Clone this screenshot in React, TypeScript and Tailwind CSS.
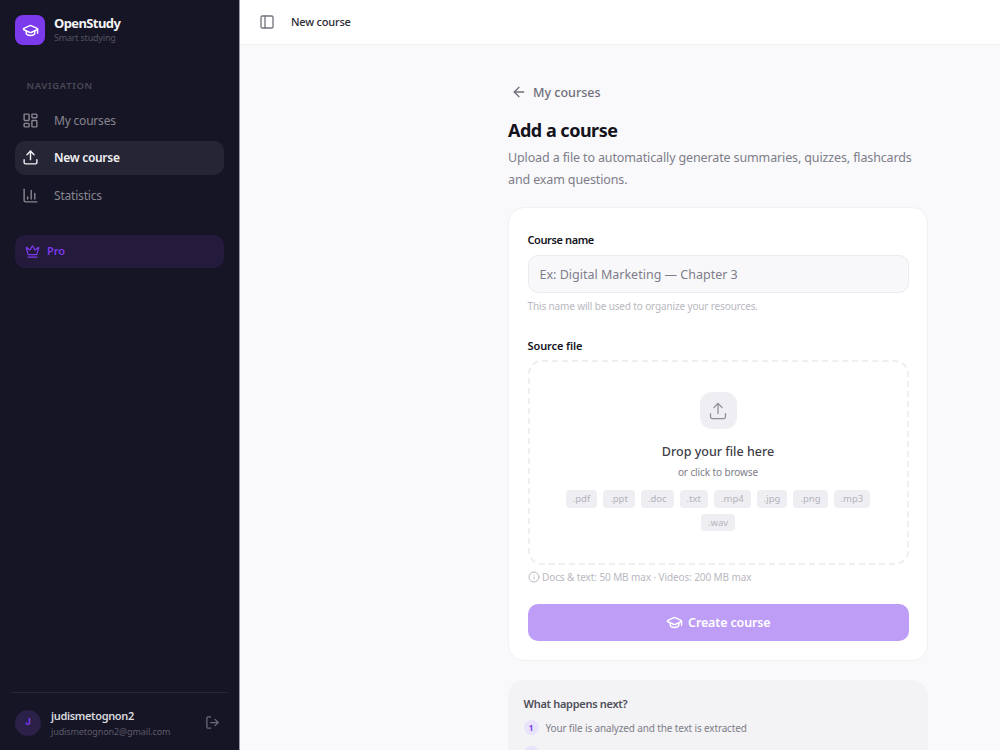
import React from 'react';
import {
  ArrowLeft,
  ChartColumn,
  Crown,
  GraduationCap,
  Info,
  LayoutDashboard,
  LogOut,
  PanelLeft,
  Upload,
} from 'lucide-react';

const extensions = ['.pdf', '.ppt', '.doc', '.txt', '.mp4', '.jpg', '.png', '.mp3', '.wav'];

function Sidebar() {
  return (
    <aside className="w-[240px] h-[750px] shrink-0 bg-[#161525] border-r border-[#9a9aa5] flex flex-col">
      <div className="flex items-center gap-[9px] pl-[15px] pt-[15px]">
        <div className="w-[30px] h-[30px] rounded-lg bg-[#7c3aed] flex items-center justify-center">
          <GraduationCap className="w-[17px] h-[17px] text-white" />
        </div>
        <div className="flex flex-col">
          <span className="text-[13px] leading-[16px] font-bold tracking-[-0.6px] text-[#f4f4f6]">OpenStudy</span>
          <span className="text-[9px] leading-[14px] tracking-[-0.2px] text-[#55535f]">Smart studying</span>
        </div>
      </div>

      <div className="mt-[34px] pl-[26.5px] text-[9.5px] leading-[14px] font-semibold tracking-[0.07em] text-[#4a4956]">NAVIGATION</div>

      <nav className="mt-[10.5px] px-[15px] flex flex-col gap-[4px]">
        <div className="h-[33.5px] flex items-center gap-[15.5px] pl-[6.5px] text-[#87858f]">
          <LayoutDashboard className="w-[17px] h-[17px]" />
          <span className="pt-[1px] text-[12px] tracking-[-0.2px]">My courses</span>
        </div>
        <div className="h-[33.5px] flex items-center gap-[15.5px] pl-[6.5px] rounded-[10px] bg-[#262536] text-[#f0f0f3]">
          <Upload className="w-[17px] h-[17px]" />
          <span className="pt-[1px] text-[12px] font-semibold tracking-[-0.3px]">New course</span>
        </div>
        <div className="h-[33.5px] flex items-center gap-[15.5px] pl-[6.5px] text-[#87858f]">
          <ChartColumn className="w-[17px] h-[17px]" />
          <span className="pt-[1px] text-[12px] tracking-[-0.2px]">Statistics</span>
        </div>
      </nav>

      <div className="mx-[15px] mt-[23px] h-[33px] rounded-[10px] bg-[#231a3c] flex items-center gap-[7px] pl-[10px] text-[#7c3aed]">
        <Crown className="w-[15px] h-[15px]" />
        <span className="text-[11px] font-semibold">Pro</span>
      </div>

      <div className="mt-auto mx-[11px] border-t border-[#272635] h-[58px] pt-[2px] flex items-center pl-[4px] pr-[8px]">
        <div className="w-[26px] h-[26px] rounded-full bg-[#2a2048] flex items-center justify-center font-['Inter',sans-serif] text-[9.5px] font-bold text-[#7c3aed]">J</div>
        <div className="ml-[10px] pt-[2px] flex flex-col flex-1">
          <span className="text-[11px] leading-[16px] font-semibold tracking-[-0.35px] text-[#d8d8de]">judismetognon2</span>
          <span className="text-[9px] leading-[15px] tracking-[-0.1px] text-[#5c5a67]">judismetognon2@gmail.com</span>
        </div>
        <LogOut className="w-[15px] h-[15px] text-[#6d6b77]" />
      </div>
    </aside>
  );
}

function Steps() {
  return (
    <div className="mt-[19px] rounded-2xl bg-[#f3f3f5] px-[15.5px] pt-[16px] pb-[16px]">
      <div className="text-[11px] leading-[16px] font-semibold tracking-[-0.3px] text-[#4f4e5a]">What happens next?</div>
      <div className="mt-[8px] flex items-center gap-[7px]">
        <div className="w-[15px] h-[15px] rounded-full bg-[#e9e2fb] flex items-center justify-center text-[8px] font-bold text-[#7c3aed]">1</div>
        <span className="text-[10px] leading-[16px] tracking-[-0.15px] text-[#7e7d89]">Your file is analyzed and the text is extracted</span>
      </div>
      <div className="mt-[10px] flex items-center gap-[7px]">
        <div className="w-[15px] h-[15px] rounded-full bg-[#e9e2fb] flex items-center justify-center text-[8px] font-bold text-[#7c3aed]">2</div>
        <span className="text-[10px] leading-[16px] tracking-[-0.15px] text-[#7e7d89]">You choose which resources to generate for your project</span>
      </div>
    </div>
  );
}

export default function App() {
  return (
    <div className="font-['Noto_Sans',sans-serif] flex w-[1000px] h-[750px] overflow-hidden bg-[#f9f9fb]">
      <Sidebar />
      <div className="flex-1 flex flex-col min-w-0">
        <header className="h-[45px] shrink-0 bg-white border-b border-[#f0f0f3] flex items-center pl-[18.5px] gap-[16.5px]">
          <PanelLeft className="w-4 h-4 text-[#75747f]" />
          <span className="text-[11px] font-medium tracking-[-0.2px] text-[#2c2b36]">New course</span>
        </header>

        <main className="flex-1 overflow-hidden pl-[268px] pr-[72px]">
          <div className="mt-[38px] flex items-center gap-[6px] text-[#6f6e7a] pl-[3px]">
            <ArrowLeft className="w-4 h-4 -mt-[2px]" />
            <span className="text-[12.5px] leading-[20px] font-medium">My courses</span>
          </div>
          <h1 className="mt-[14px] text-[18px] leading-[26px] font-bold tracking-[-0.5px] text-[#14131c]">Add a course</h1>
          <p className="mt-[4px] text-[12.5px] leading-[22px] tracking-[-0.13px] text-[#7e7d89]">
            Upload a file to automatically generate summaries, quizzes, flashcards and exam questions.
          </p>

          <div className="mt-[16px] rounded-2xl bg-white border border-[#f1f1f4] px-[18.5px] pt-[24px] pb-[18.5px]">
            <label className="block text-[11px] leading-[16px] font-semibold tracking-[-0.4px] text-[#14131c]">Course name</label>
            <div className="mt-[7px] h-[38px] rounded-[10px] border border-[#ececf0] bg-[#f8f8fa] flex items-center pl-[11px] pt-[2px] text-[12.5px] text-[#7e7d89]">
              Ex: Digital Marketing — Chapter 3
            </div>
            <p className="mt-[6px] text-[10px] leading-[14px] tracking-[-0.14px] text-[#b9b8c0]">This name will be used to organize your resources.</p>

            <label className="mt-[25px] block text-[11px] leading-[16px] font-semibold tracking-[-0.1px] text-[#14131c]">Source file</label>
            <div className="mt-[6px] h-[205px] rounded-[14px] border-2 border-dashed border-[#efeff3] flex flex-col items-center pt-[30px]">
              <div className="w-[37px] h-[37px] rounded-xl bg-[#efeff3] flex items-center justify-center">
                <Upload strokeWidth={1.5} className="w-5 h-5 text-[#8e8d98]" />
              </div>
              <div className="mt-[14px] text-[12.5px] leading-[18px] font-medium text-[#3e3d49]">Drop your file here</div>
              <div className="mt-[3px] text-[10px] leading-[16px] tracking-[-0.1px] text-[#7e7d89]">or click to browse</div>
              <div className="mt-[10px] w-[320px] flex flex-wrap justify-center gap-x-[6px] gap-y-[6px]">
                {extensions.map(ext => (
                  <span key={ext} className="h-[17.5px] px-[7px] rounded-[4px] bg-[#efeff3] text-[9.5px] leading-[17.5px] text-[#b4b3bc]">{ext}</span>
                ))}
              </div>
            </div>
            <div className="mt-[5px] flex items-center gap-[2.5px] text-[10px] leading-[14px] tracking-[-0.1px] text-[#b9b8c0]">
              <Info className="w-3 h-3" />
              <span>Docs &amp; text: 50 MB max · Videos: 200 MB max</span>
            </div>

            <button className="mt-[20px] w-full h-[37px] rounded-[10px] bg-[#bd9df6] flex items-center justify-center gap-[5.5px] text-white text-[12.5px] font-semibold tracking-[-0.15px]">
              <GraduationCap className="w-[17px] h-[17px]" />
              <span className="pt-[2px]">Create course</span>
            </button>
          </div>

          <Steps />
        </main>
      </div>
    </div>
  );
}
